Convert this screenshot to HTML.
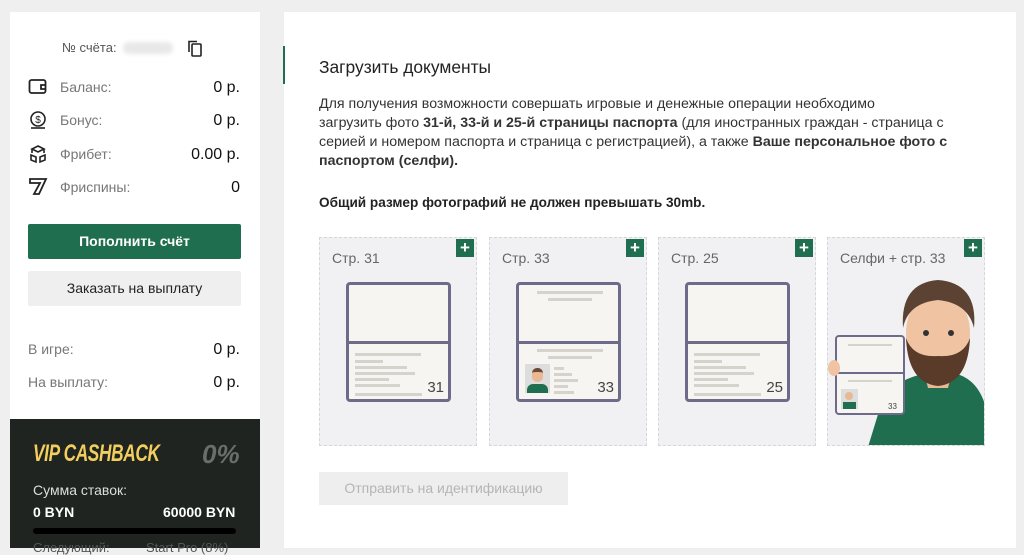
<!DOCTYPE html><html><head><meta charset="utf-8"><style>
*{box-sizing:border-box;margin:0;padding:0}
body{width:1024px;height:548px;overflow:hidden;background:#efefef;font-family:"Liberation Sans",sans-serif;position:relative;color:#222}
.a{position:absolute}
.row{position:absolute;left:28px;width:212px;font-size:14px;color:#777}
.row b{position:absolute;right:0;top:0px;font-size:16px;color:#111;font-weight:normal}
.card{position:absolute;top:237px;width:158px;height:209px;background:#f1f1f3;border:1px dashed #d6d6d8}
.card .t{position:absolute;left:12px;top:12px;font-size:14px;color:#666}
.plus{position:absolute;right:2px;top:1px;width:18px;height:18px;background:#1f6e4f;color:#fff;font-size:17px;line-height:17px;text-align:center;font-weight:bold}
.pp{position:absolute;left:26px;top:44px;width:105px;height:120px;border:3px solid #6e6a8a;border-radius:4px;background:#f6f5f2}
.pp .d{position:absolute;left:0;right:0;top:56px;border-top:3px solid #6e6a8a}
.ln{position:absolute;height:3px;background:#d6d3cc}
.num{position:absolute;right:4px;bottom:3px;font-size:15px;color:#444}
.p{font-size:14.2px;line-height:19px;color:#333;white-space:nowrap}
</style></head><body>
<div class="a" style="left:10px;top:12px;width:250px;height:408px;background:#fff"></div>
<div class="a" style="left:62px;top:40px;font-size:13px;color:#555">№ счёта:</div>
<div class="a" style="left:123px;top:42px;width:50px;height:12px;background:#e8e8e8;border-radius:6px;filter:blur(2px)"></div>
<svg class="a" style="left:186px;top:39px" width="18" height="18" viewBox="0 0 18 18" fill="none" stroke="#222" stroke-width="1.6"><rect x="6" y="5" width="9" height="12" rx="1"/><path d="M3 13V2.5h8"/></svg>
<svg class="a" style="left:28px;top:78px" width="20" height="18" fill="none" stroke="#222" stroke-width="1.8"><rect x="1.5" y="2" width="16" height="13" rx="2"/><path d="M17 7h-4v4h4"/></svg>
<svg class="a" style="left:28px;top:110px" width="20" height="20" fill="none" stroke="#222" stroke-width="1.6"><circle cx="10" cy="9" r="7"/><path d="M3 18h14"/><text x="10" y="13" font-size="10" text-anchor="middle" fill="#222" stroke="none" font-family="Liberation Sans">$</text></svg>
<svg class="a" style="left:28px;top:144px" width="20" height="20" fill="none" stroke="#222" stroke-width="1.6"><path d="M10 2l6 3-6 3-6-3zM4 5v4M16 5v4M3 11l5 2v5l-5-2zM17 11l-5 2v5l5-2z"/></svg>
<svg class="a" style="left:28px;top:176px" width="20" height="20" fill="none" stroke="#222" stroke-width="1.8"><path d="M2 3h16l-7 15H6l6-11H2z"/></svg>
<div class="row" style="top:79px;left:60px;width:180px">Баланс:<b>0 р.</b></div>
<div class="row" style="top:112px;left:60px;width:180px">Бонус:<b>0 р.</b></div>
<div class="row" style="top:146px;left:60px;width:180px">Фрибет:<b>0.00 р.</b></div>
<div class="row" style="top:179px;left:60px;width:180px">Фриспины:<b>0</b></div>
<div class="a" style="left:28px;top:224px;width:213px;height:35px;background:#1f6e4f;border-radius:2px;color:#fff;font-size:14px;font-weight:bold;text-align:center;line-height:35px">Пополнить счёт</div>
<div class="a" style="left:28px;top:271px;width:213px;height:35px;background:#efefef;border-radius:2px;color:#222;font-size:14px;text-align:center;line-height:35px">Заказать на выплату</div>
<div class="row" style="top:341px">В игре:<b>0 р.</b></div>
<div class="row" style="top:374px">На выплату:<b>0 р.</b></div>
<div class="a" style="left:10px;top:419px;width:250px;height:129px;background:#1f2421"></div>
<div class="a" style="left:33px;top:440px;font-size:24px;font-weight:bold;font-style:italic;color:#f2cf5c;transform:scaleX(.72);transform-origin:left;letter-spacing:-.5px">VIP CASHBACK</div>
<div class="a" style="left:202px;top:439px;font-size:26px;font-weight:bold;font-style:italic;color:#6b6d6b">0%</div>
<div class="a" style="left:33px;top:482px;font-size:14px;color:#ddd">Сумма ставок:</div>
<div class="a" style="left:33px;top:504px;font-size:14px;color:#fff;font-weight:bold">0 BYN</div>
<div class="a" style="left:163px;top:504px;font-size:14px;color:#fff;font-weight:bold">60000 BYN</div>
<div class="a" style="left:33px;top:528px;width:203px;height:6px;background:#000;border-radius:3px"></div>
<div class="a" style="left:33px;top:540px;font-size:13px;color:#555">Следующий:</div>
<div class="a" style="left:146px;top:540px;font-size:13px;color:#555">Start Pro (8%)</div>

<div class="a" style="left:284px;top:12px;width:732px;height:536px;background:#fff"></div>
<div class="a" style="left:283px;top:46px;width:2px;height:38px;background:#1f6e4f"></div>
<div class="a" style="left:319px;top:57px;font-size:17.4px;color:#222">Загрузить документы</div>
<div class="a p" style="left:319px;top:95px">Для получения возможности совершать игровые и денежные операции необходимо<br>загрузить фото <b>31-й, 33-й и 25-й страницы паспорта</b> (для иностранных граждан - страница с<br>серией и номером паспорта и страница с регистрацией), а также <b>Ваше персональное фото с<br>паспортом (селфи).</b></div>
<div class="a" style="left:319px;top:195px;font-size:13.6px;font-weight:bold;color:#222">Общий размер фотографий не должен превышать 30mb.</div>

<div class="card" style="left:319px"><div class="t">Стр. 31</div><div class="plus">+</div>
<div class="pp"><div class="d"></div>
<div class="ln" style="left:6px;top:68px;width:66px"></div><div class="ln" style="left:6px;top:75px;width:28px"></div><div class="ln" style="left:6px;top:81px;width:52px"></div><div class="ln" style="left:6px;top:87px;width:60px"></div><div class="ln" style="left:6px;top:93px;width:34px"></div><div class="ln" style="left:6px;top:99px;width:45px"></div><div class="ln" style="left:6px;top:108px;width:67px"></div><div class="num">31</div></div></div>
<div class="card" style="left:489px"><div class="t">Стр. 33</div><div class="plus">+</div>
<div class="pp"><div class="d"></div>
<div class="ln" style="left:18px;top:6px;width:66px"></div><div class="ln" style="left:29px;top:13px;width:44px"></div><div class="ln" style="left:18px;top:64px;width:66px"></div><div class="ln" style="left:29px;top:71px;width:44px"></div>
<div style="position:absolute;left:6px;top:79px;width:25px;height:29px;background:#ddd;overflow:hidden"><div style="position:absolute;left:7px;top:4px;width:11px;height:14px;background:#e9b894;border-radius:5px;border-top:4px solid #6b4a36"></div><div style="position:absolute;left:2px;top:20px;width:21px;height:10px;background:#1f6e4f;border-radius:6px 6px 0 0"></div></div>
<div class="ln" style="left:35px;top:82px;width:10px"></div><div class="ln" style="left:35px;top:88px;width:18px"></div><div class="ln" style="left:35px;top:94px;width:24px"></div><div class="ln" style="left:35px;top:100px;width:14px"></div><div class="ln" style="left:35px;top:106px;width:20px"></div><div class="num">33</div></div></div>
<div class="card" style="left:658px"><div class="t">Стр. 25</div><div class="plus">+</div>
<div class="pp"><div class="d"></div>
<div class="ln" style="left:6px;top:68px;width:66px"></div><div class="ln" style="left:6px;top:75px;width:28px"></div><div class="ln" style="left:6px;top:81px;width:52px"></div><div class="ln" style="left:6px;top:87px;width:60px"></div><div class="ln" style="left:6px;top:93px;width:34px"></div><div class="ln" style="left:6px;top:99px;width:45px"></div><div class="ln" style="left:6px;top:108px;width:67px"></div><div class="num">25</div></div></div>
<div class="card" style="left:827px;overflow:hidden"><div class="t">Селфи + стр. 33</div><div class="plus">+</div>
<svg style="position:absolute;left:0;top:0" width="158" height="209">
<path d="M40 209 L55 160 Q70 140 100 135 L125 135 Q150 140 158 170 L158 209Z" fill="#1f6e4f"/>
<path d="M95 130 L100 150 L120 150 L125 130Z" fill="#e9b894"/>
<ellipse cx="110" cy="95" rx="32" ry="42" fill="#f0c4a2"/>
<path d="M78 100 Q80 145 110 148 Q140 145 142 100 Q135 120 110 118 Q85 120 78 100Z" fill="#5a3a28"/>
<path d="M75 90 Q72 45 110 42 Q150 45 146 90 Q140 65 110 62 Q80 65 75 90Z" fill="#5b4233"/>
<circle cx="98" cy="95" r="3" fill="#333"/><circle cx="123" cy="95" r="3" fill="#333"/>
<rect x="8" y="98" width="68" height="78" rx="3" fill="#f6f5f2" stroke="#6e6a8a" stroke-width="2"/>
<line x1="8" y1="135" x2="76" y2="135" stroke="#6e6a8a" stroke-width="2"/>
<rect x="20" y="106" width="44" height="2" fill="#d6d3cc"/><rect x="20" y="142" width="44" height="2" fill="#d6d3cc"/>
<rect x="13" y="151" width="17" height="20" fill="#ddd"/><circle cx="21" cy="158" r="4" fill="#e9b894"/><rect x="15" y="164" width="13" height="7" fill="#1f6e4f"/>
<text x="60" y="171" font-size="8" fill="#444" font-family="Liberation Sans">33</text>
<ellipse cx="6" cy="130" rx="6" ry="8" fill="#f0c4a2"/>
</svg></div>
<div class="a" style="left:319px;top:472px;width:249px;height:33px;background:#eeeeee;color:#b5b5b5;font-size:14px;text-align:center;line-height:33px">Отправить на идентификацию</div>
</body></html>
